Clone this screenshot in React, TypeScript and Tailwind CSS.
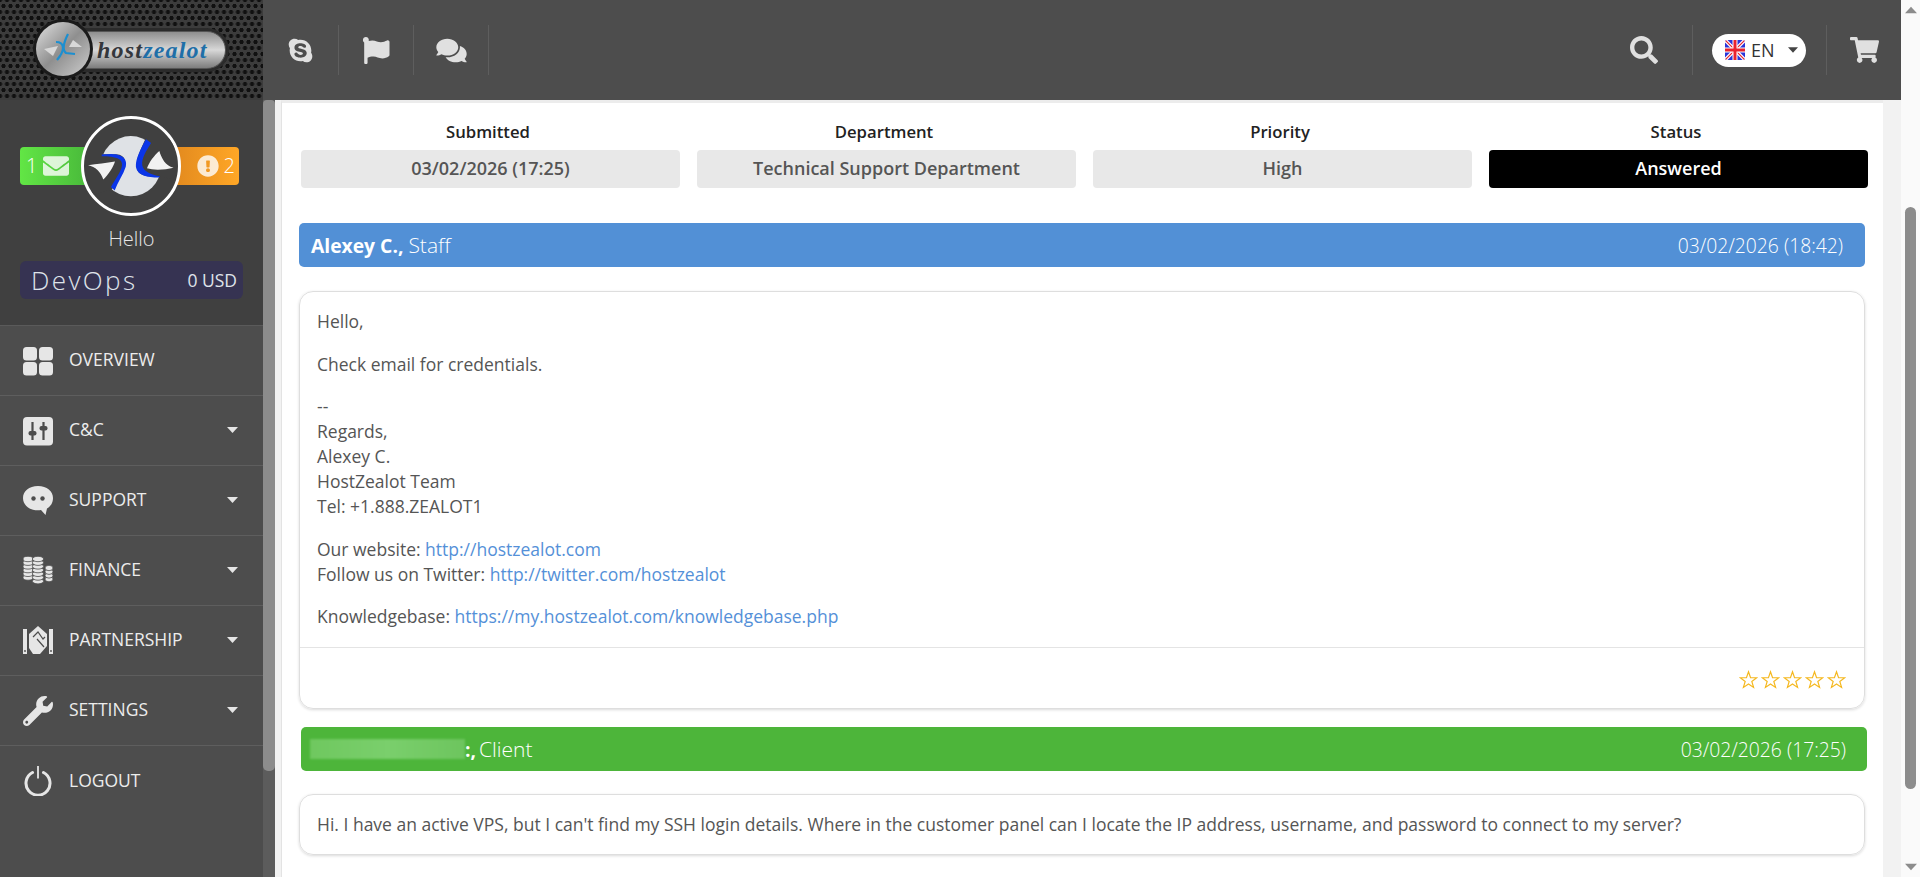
import React from "react";
import { FaSkype, FaFlag, FaComments, FaSearch, FaShoppingCart, FaEnvelope, FaExclamationCircle, FaWrench } from "react-icons/fa";

function Swirl({ className }: { className?: string }) {
  return (
    <svg viewBox="244 49 297 297" className={className}>
      <circle cx="392" cy="198" r="95" fill="#dfe2e6" />
      <path d="M285 160 L345 160 C380 162 378 190 365 220 L332 272 L270 290 L255 160 Z" fill="#404040" />
      <path d="M440 108 C425 140 400 190 415 215 C425 232 460 232 490 232 L530 240 L530 108 Z" fill="#404040" />
      <path d="M300 161 C340 156 385 160 376 200 C368 225 350 250 341 275 L329 264 C345 235 362 215 364 195 C366 175 345 167 300 167 Z" fill="#0a35e8" />
      <path d="M440 113 L456 125 C440 150 425 175 428 195 C432 215 455 225 485 230 L480 234 C445 234 412 228 408 200 C406 175 425 140 440 113 Z" fill="#0a35e8" />
      <path d="M527 203 C500 195 490 175 482 150 C465 165 450 185 443 205 C465 212 500 210 527 203 Z" fill="#f2f2f2" />
      <path d="M257 195 C285 190 315 188 342 183 C335 205 320 225 305 240 C297 215 280 200 257 195 Z" fill="#f2f2f2" />
    </svg>
  );
}

function Logo() {
  return (
    <div className="relative w-[198px] h-[60px]">
      <div className="absolute left-[50px] top-[8px] w-[148px] h-[44px] rounded-r-[22px] bg-[#2b2b2b] p-[3px] pl-0">
        <div className="w-full h-full rounded-r-[19px] bg-gradient-to-b from-[#8f8f8f] via-[#d8d8d8] to-[#7d7d7d] flex items-center pl-[16px] border-y border-r border-[#555]">
          <span className="text-[24px] font-bold italic leading-none tracking-[1.2px] [font-family:'Liberation_Serif',serif] whitespace-nowrap mt-[-1px]">
            <span className="text-[#34373c]">host</span>
            <span className="text-[#1f6fa8]">zealot</span>
          </span>
        </div>
      </div>
      <div className="absolute left-[2px] top-[-1px] w-[60px] h-[60px] rounded-full bg-[#1b1b1b] p-[3px]">
        <div className="w-full h-full rounded-full bg-gradient-to-br from-[#e4e4e4] via-[#8f8f8f] to-[#cfcfcf] flex items-center justify-center">
          <svg viewBox="0 0 54 54" className="w-[54px] h-[54px]">
            <path d="M8 27 L22 24 L17 34 Z" fill="#d8d8d8" />
            <path d="M46 25 L33 25 L37 18 Z" fill="#d8d8d8" />
            <path d="M20 20 C29 20 28 28 24 34 L21 38" fill="none" stroke="#1c8fd0" strokeWidth="2.2" />
            <path d="M32 12 C28 20 26 28 30 31 L39 32" fill="none" stroke="#1c8fd0" strokeWidth="2.2" />
          </svg>
        </div>
      </div>
    </div>
  );
}

function Sep() {
  return <div className="w-px h-[50px] bg-[#5e5e5e] shrink-0" />;
}

function Caret({ className }: { className?: string }) {
  return (
    <svg viewBox="0 0 11 6" className={className}>
      <path d="M0 0 H11 L5.5 6 Z" fill="currentColor" />
    </svg>
  );
}

function UkFlag() {
  return (
    <svg viewBox="0 0 20 20" className="w-[20px] h-[20px] shrink-0 rounded-[2px]">
      <rect width="20" height="20" fill="#2a35d8" />
      <path d="M0 0 L20 20 M20 0 L0 20" stroke="#fff" strokeWidth="3.5" />
      <path d="M0 0 L20 20 M20 0 L0 20" stroke="#e8232f" strokeWidth="1.2" />
      <path d="M10 0 V20 M0 10 H20" stroke="#fff" strokeWidth="5" />
      <path d="M10 0 V20 M0 10 H20" stroke="#e8232f" strokeWidth="3" />
    </svg>
  );
}

const I = "w-[30px] h-[30px] shrink-0 text-[#e6e6e6]";

function IconOverview() {
  return (
    <svg viewBox="0 0 30 30" className={I}>
      <rect x="0" y="1" width="14" height="13.5" rx="3.5" fill="currentColor" />
      <rect x="16" y="1" width="14" height="13.5" rx="3.5" fill="currentColor" />
      <rect x="0" y="16" width="14" height="13.5" rx="3.5" fill="currentColor" />
      <rect x="16" y="16" width="14" height="13.5" rx="3.5" fill="currentColor" />
    </svg>
  );
}
function IconCC() {
  return (
    <svg viewBox="0 0 30 30" className={I}>
      <rect x="0" y="1" width="30" height="28.5" rx="4" fill="currentColor" />
      <path d="M9.5 6 V24 M20.5 6 V24" stroke="#4d4d4d" strokeWidth="2.2" />
      <rect x="5.5" y="15" width="8" height="4.5" rx="2" fill="#4d4d4d" />
      <rect x="16.5" y="10" width="8" height="4.5" rx="2" fill="#4d4d4d" />
    </svg>
  );
}
function IconSupport() {
  return (
    <svg viewBox="0 0 30 30" className={I}>
      <path d="M15 0 C24 0 30 5 30 12 C30 17 27.5 20.5 24 22.5 L22.5 29 L18 24 C17 24.2 16 24.3 15 24.3 C6 24.3 0 19 0 12 C0 5 6 0 15 0 Z" fill="currentColor" />
      <circle cx="10.5" cy="12.5" r="2.2" fill="#4d4d4d" />
      <circle cx="19.5" cy="12.5" r="2.2" fill="#4d4d4d" />
    </svg>
  );
}
function Coins({ x, top, count, rx }: { x: number; top: number; count: number; rx: number }) {
  const rows = Array.from({ length: count }, (_, i) => count - 1 - i);
  return (
    <g>
      {rows.map((i) => (
        <ellipse key={i} cx={x} cy={top + 3 + i * 3.7} rx={rx} ry="2.7" fill="currentColor" stroke="#4d4d4d" strokeWidth="0.8" />
      ))}
    </g>
  );
}
function IconFinance() {
  return (
    <svg viewBox="0 0 30 30" className={I}>
      <Coins x={5} top={0} count={6} rx={5} />
      <Coins x={15} top={0} count={7} rx={5.6} />
      <Coins x={26} top={9} count={4} rx={4} />
    </svg>
  );
}
function IconPartner() {
  return (
    <svg viewBox="0 0 30 30" className={I}>
      <rect x="0" y="3" width="4" height="25" fill="currentColor" />
      <rect x="26" y="3" width="4" height="25" fill="currentColor" />
      <circle cx="2" cy="25" r="0.9" fill="#4d4d4d" />
      <circle cx="28" cy="25" r="0.9" fill="#4d4d4d" />
      <path d="M15 0 L24 8 L24 20 L17 28 L10 28 L6 22 L6 8 Z" fill="currentColor" />
      <path d="M10 11 L15 6 L20 13 L22 11 M14 13 L21 21" fill="none" stroke="#4d4d4d" strokeWidth="1.2" />
    </svg>
  );
}
function IconPower() {
  return (
    <svg viewBox="0 0 30 30" className={I}>
      <path d="M9.5 6.5 A12 12 0 1 0 20.5 6.5" fill="none" stroke="currentColor" strokeWidth="3" strokeLinecap="round" />
      <path d="M15 0 V12.5" stroke="currentColor" strokeWidth="1.8" />
    </svg>
  );
}

const nav: { label: string; icon: React.ReactNode; caret: boolean }[] = [
  { label: "OVERVIEW", icon: <IconOverview />, caret: false },
  { label: "C&C", icon: <IconCC />, caret: true },
  { label: "SUPPORT", icon: <IconSupport />, caret: true },
  { label: "FINANCE", icon: <IconFinance />, caret: true },
  { label: "PARTNERSHIP", icon: <IconPartner />, caret: true },
  { label: "SETTINGS", icon: <FaWrench className={I} />, caret: true },
  { label: "LOGOUT", icon: <IconPower />, caret: false },
];

function Sidebar() {
  return (
    <aside className="w-[263px] shrink-0 flex flex-col bg-[#4d4d4d]">
      <div className="h-[226px] shrink-0 bg-[#404040] border-b border-[#5a5a5a] flex flex-col items-center pt-[16px]">
        <div className="relative w-[223px] h-[100px] flex items-center justify-between pr-[4px]">
          <div className="w-[80px] h-[38px] rounded-[4px] bg-gradient-to-r from-[#62e645] to-[#45b239] flex items-center pl-[6px] gap-[6px] text-white text-[20px] font-light">
            <span>1</span>
            <FaEnvelope className="w-[26px] h-[26px] opacity-80" />
          </div>
          <div className="w-[80px] h-[38px] rounded-[4px] bg-gradient-to-r from-[#dc831d] to-[#ffa726] flex items-center justify-end pr-[4px] gap-[5px] text-white text-[20px] font-light">
            <FaExclamationCircle className="w-[22px] h-[22px] opacity-80" />
            <span>2</span>
          </div>
          <div className="absolute left-[61px] top-0 w-[100px] h-[100px] rounded-full border-[3px] border-white bg-[#404040] overflow-hidden">
            <Swirl className="w-[94px] h-[94px]" />
          </div>
        </div>
        <div className="mt-[10px] text-[20px] leading-[25px] font-light text-[#e6e6e6]">Hello</div>
        <div className="mt-[10px] w-[223px] h-[38px] rounded-[6px] bg-[#363352] flex items-center justify-between pl-[11px] pr-[6px] text-[#dfe3ea]">
          <span className="text-[26px] font-light tracking-[2.4px]">DevOps</span>
          <span className="text-[17.5px]">0 USD</span>
        </div>
      </div>
      <nav className="flex flex-col">
        {nav.map((n, i) => (
          <div
            key={n.label}
            className={`h-[70px] flex items-center pl-[23px] pr-[25px] ${i < nav.length - 1 ? "border-b border-[#5e5e5e]" : ""}`}
          >
            {n.icon}
            <span className="ml-[16px] mt-[-2px] text-[17.5px] text-[#ececec] flex-1">{n.label}</span>
            {n.caret && <Caret className="w-[11px] h-[6px] mt-[-2px] text-[#e6e6e6]" />}
          </div>
        ))}
      </nav>
    </aside>
  );
}

function Field({ label, value, dark }: { label: string; value: string; dark?: boolean }) {
  return (
    <div className="flex flex-col items-center">
      <div className="h-[22px] mb-[7px] pr-[5px] text-[16.7px] leading-[22px] font-semibold text-[#222] text-center">{label}</div>
      <div
        className={`w-full h-[38px] pb-[2px] rounded-[4px] flex items-center justify-center text-[18px] font-semibold ${
          dark ? "bg-black text-white" : "bg-[#e8e8e8] text-[#555]"
        }`}
      >
        {value}
      </div>
    </div>
  );
}

function Link({ children }: { children: React.ReactNode }) {
  return <a className="text-[#5490d8]">{children}</a>;
}

function Star() {
  return (
    <svg viewBox="0 0 24 24" className="w-[19px] h-[19px]">
      <path
        d="M12 2.2 L14.6 9.6 L22.4 9.8 L16.2 14.5 L18.4 22 L12 17.6 L5.6 22 L7.8 14.5 L1.6 9.8 L9.4 9.6 Z"
        fill="none"
        stroke="#f5b81f"
        strokeWidth="1.5"
        strokeLinejoin="miter"
      />
    </svg>
  );
}

function Content() {
  return (
    <div className="w-[1602px] shrink-0 bg-white border-l border-[#e3e3e3] border-t-[3px] border-t-[#ececec] overflow-hidden text-[17.5px] leading-[25px] text-[#555]">
      <div className="pl-[19px] pr-[15px] pt-[18px]">
        <div className="grid grid-cols-4 gap-x-[17px]">
          <Field label="Submitted" value="03/02/2026 (17:25)" />
          <Field label="Department" value="Technical Support Department" />
          <Field label="Priority" value="High" />
          <Field label="Status" value="Answered" dark />
        </div>
      </div>
      <div className="pl-[17px] pr-[18px] mt-[35px]">
        <div className="h-[44px] rounded-[5px] bg-[#5290d6] text-white text-[19.3px] flex items-center justify-between pl-[12px] pr-[22px] font-light">
          <span><b className="font-bold">Alexey C.,</b> <span className="text-[21px]">Staff</span></span>
          <span>03/02/2026 (18:42)</span>
        </div>
      </div>
      <div className="pl-[17px] pr-[18px]">
        <div className="mt-[24px] rounded-[14px] border border-[#dedede] shadow-[0_1px_3px_rgba(0,0,0,0.15)]">
          <div className="px-[17px] pt-[17px] pb-[18px]">
            <p className="mb-[17.5px]">Hello,</p>
            <p className="mb-[17.5px]">Check email for credentials.</p>
            <p className="mb-[17.5px]">
              --<br />Regards,<br />Alexey C.<br />HostZealot Team<br />Tel: +1.888.ZEALOT1
            </p>
            <p className="mb-[17.5px]">
              Our website: <Link>http://hostzealot.com</Link>
              <br />
              Follow us on Twitter: <Link>http://twitter.com/hostzealot</Link>
            </p>
            <p>
              Knowledgebase: <Link>https://my.hostzealot.com/knowledgebase.php</Link>
            </p>
          </div>
          <div className="h-[61px] border-t border-[#e4e4e4] flex items-center justify-end pr-[18px] gap-[3px] pt-[2px]">
            <Star /><Star /><Star /><Star /><Star />
          </div>
        </div>
      </div>
      <div className="pl-[19px] pr-[16px] mt-[18px]">
        <div className="h-[44px] rounded-[5px] bg-[#4db53a] text-white text-[19.3px] flex items-center justify-between pl-[9px] pr-[21px] font-light">
          <span className="flex items-center">
            <span className="w-[155px] h-[20px] bg-gradient-to-r from-[#6fc85f] via-[#7acf6c] to-[#6dc55e] blur-[1px]" />
            <b className="font-bold">:,</b><span className="ml-[3px] text-[21px]">Client</span>
          </span>
          <span>03/02/2026 (17:25)</span>
        </div>
      </div>
      <div className="pl-[17px] pr-[18px] mt-[23px]">
        <div className="h-[61px] rounded-[14px] border border-[#dedede] shadow-[0_1px_3px_rgba(0,0,0,0.15)] px-[17px] flex items-center">
          Hi. I have an active VPS, but I can't find my SSH login details. Where in the customer panel can I locate the IP address, username, and password to connect to my server?
        </div>
      </div>
    </div>
  );
}

export default function App() {
  return (
    <div className="flex h-[877px] w-full overflow-hidden bg-[#f2f2f2] [font-family:'Open_Sans',sans-serif]">
      <div className="w-[1901px] shrink-0 flex flex-col">
        <header className="h-[100px] shrink-0 flex bg-[#4d4d4d]">
          <div className="w-[263px] shrink-0 pl-[31px] pt-[20px] bg-[#3c3c3c] bg-[radial-gradient(circle,#101010_1.8px,transparent_2.4px),radial-gradient(circle,#101010_1.8px,transparent_2.4px)] bg-[length:7px_12px] bg-[position:0_0,3.5px_6px]">
            <Logo />
          </div>
          <div className="flex-1 flex items-center text-[#e0e0e0]">
            <div className="w-[75px] flex justify-center"><FaSkype className="w-[27px] h-[27px]" /></div>
            <Sep />
            <div className="w-[74px] flex justify-center"><FaFlag className="w-[30px] h-[27px]" /></div>
            <Sep />
            <div className="w-[74px] flex justify-center"><FaComments className="w-[31px] h-[27px]" /></div>
            <Sep />
            <div className="flex-1" />
            <FaSearch className="w-[28px] h-[28px]" />
            <div className="w-[34px]" />
            <Sep />
            <div className="ml-[19px] w-[94px] h-[33px] rounded-full bg-white flex items-center pl-[13px] text-[#333] text-[18px] shrink-0">
              <UkFlag />
              <span className="ml-[6px]">EN</span>
              <Caret className="ml-[13px] w-[10px] h-[6px] text-[#444]" />
            </div>
            <div className="w-[20px]" />
            <Sep />
            <div className="w-[74px] flex justify-center"><FaShoppingCart className="w-[29px] h-[26px]" /></div>
          </div>
        </header>
        <div className="flex-1 min-h-0 flex">
          <Sidebar />
          <div className="w-[12px] shrink-0 bg-[#5c5c5c]">
            <div className="h-[671px] rounded-b-[5px] rounded-t-[4px] bg-[#8c8c8c]" />
          </div>
          <div className="w-[6px] shrink-0 bg-[#f2f2f2]" />
          <Content />
        </div>
      </div>
      <div className="w-[19px] shrink-0 bg-[#fafafa] flex flex-col items-center">
        <Caret className="mt-[6px] w-[12px] h-[8px] rotate-180 text-[#8c8c8c]" />
        <div className="mt-[193px] w-[11px] h-[582px] rounded-full bg-[#8c8c8c]" />
        <div className="flex-1" />
        <Caret className="mb-[6px] w-[12px] h-[8px] text-[#8c8c8c]" />
      </div>
    </div>
  );
}
